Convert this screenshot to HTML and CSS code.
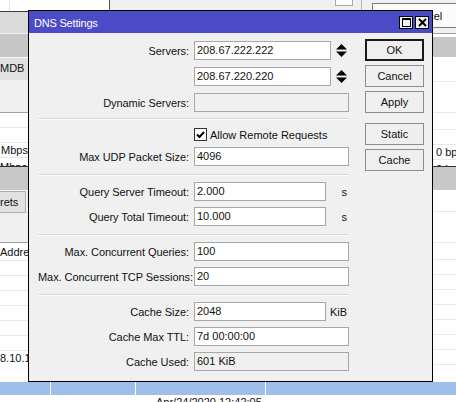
FILE: index.html
```html
<!DOCTYPE html>
<html>
<head>
<meta charset="utf-8">
<title>DNS Settings</title>
<link rel="stylesheet" href="styles.css">
</head>
<body>
<div class="desk">
  <div class="bg-left">
    <div class="l-top"></div>
    <div class="l-hdr1"></div>
    <div class="l-hdr2"></div>
    <div class="l-sel"><span class="txt">MDB</span></div>
    <div class="l-pane"></div>
    <div class="l-list">
      <div class="trow r15"></div>
      <div class="trow r15"></div>
      <div class="trow r15"><span class="txt">Mbps</span></div>
      <div class="trow cut"><span class="txt">Mbps</span></div>
    </div>
    <div class="l-hdr3"></div>
    <div class="l-tool"><span class="l-tbtn">rets</span></div>
    <div class="l-table">
      <div class="trow thead"><span class="txt">Addres</span></div>
      <div class="trow r15"></div>
      <div class="trow r15"></div>
      <div class="trow r15"></div>
      <div class="trow r15"></div>
      <div class="trow r15"></div>
      <div class="trow r15"></div>
      <div class="trow r15"><span class="txt">8.10.1</span></div>
    </div>
    <div class="blue"></div>
    <div class="foot"></div>
  </div>

  <div class="bg-mid">
    <div class="m-top">
      <div class="m-white"></div>
      <div class="m-gray">
        <span class="m-box"></span>
        <span class="m-vline"></span>
        <span class="m-btn"></span>
      </div>
    </div>
    <div class="m-hidden"></div>
    <div class="blue m-blue">
      <span class="bsep s1"></span>
      <span class="bsep s2"></span>
      <span class="bsep s3"></span>
    </div>
    <div class="foot m-foot"><span class="date">Apr/24/2020 12:42:05</span></div>
  </div>

  <div class="bg-right">
    <div class="r-top"></div>
    <div class="r-btn"><span class="r-btn-txt">Cancel</span></div>
    <div class="r-gap"></div>
    <div class="r-hdr0"></div>
    <div class="r-hdr2"></div>
    <div class="r-list">
      <div class="trow r25"></div>
      <div class="trow r31"></div>
      <div class="trow r17"></div>
      <div class="trow r15"></div>
      <div class="trow r15"><span class="txt">0 bps</span></div>
      <div class="trow cut"><span class="txt">0 bps</span></div>
    </div>
    <div class="l-hdr3"></div>
    <div class="r-table">
      <div class="trow r22"></div>
      <div class="trow r31"></div>
      <div class="trow r17"></div>
      <div class="trow r15"></div>
      <div class="trow r15"></div>
      <div class="trow r15"></div>
      <div class="trow r15"></div>
      <div class="trow r15"></div>
      <div class="trow r15"></div>
      <div class="trow r15"></div>
    </div>
    <div class="blue"></div>
    <div class="foot"></div>
  </div>
</div>

<div class="dialog">
  <div class="titlebar">
    <span class="title">DNS Settings</span>
    <span class="tb-btns">
      <span class="tb-btn">
        <svg width="9" height="9" viewBox="0 0 9 9"><rect x="0.5" y="0.5" width="8" height="8" fill="none" stroke="#000" stroke-width="1"/><rect x="0" y="0" width="9" height="2" fill="#000"/></svg>
      </span>
      <span class="tb-btn">
        <svg width="9" height="9" viewBox="0 0 9 9"><path d="M1 1 L8 8 M8 1 L1 8" stroke="#000" stroke-width="2" fill="none"/></svg>
      </span>
    </span>
  </div>
  <div class="dlg-body">
    <div class="form">
      <div class="group g1">
        <div class="row">
          <span class="lbl">Servers:</span>
          <span class="input w-srv">208.67.222.222</span>
          <span class="updown"><svg width="11" height="13" viewBox="0 0 11 13"><polygon points="0,5.5 5.5,0 11,5.5" fill="#000"/><polygon points="0,7.5 5.5,13 11,7.5" fill="#000"/></svg></span>
        </div>
        <div class="row">
          <span class="lbl"></span>
          <span class="input w-srv">208.67.220.220</span>
          <span class="updown"><svg width="11" height="13" viewBox="0 0 11 13"><polygon points="0,5.5 5.5,0 11,5.5" fill="#000"/><polygon points="0,7.5 5.5,13 11,7.5" fill="#000"/></svg></span>
        </div>
        <div class="row">
          <span class="lbl">Dynamic Servers:</span>
          <span class="input w-full disabled"></span>
        </div>
      </div>
      <div class="sep"></div>
      <div class="group g2">
        <div class="row">
          <span class="lbl"></span>
          <span class="check"><svg width="9" height="8" viewBox="0 0 9 8"><path d="M1 3.5 L3.5 6 L8 1" stroke="#000" stroke-width="2" fill="none"/></svg></span>
          <span class="check-lbl">Allow Remote Requests</span>
        </div>
        <div class="row">
          <span class="lbl">Max UDP Packet Size:</span>
          <span class="input w-full">4096</span>
        </div>
      </div>
      <div class="sep"></div>
      <div class="group">
        <div class="row">
          <span class="lbl">Query Server Timeout:</span>
          <span class="input w-short">2.000</span>
          <span class="unit">s</span>
        </div>
        <div class="row">
          <span class="lbl">Query Total Timeout:</span>
          <span class="input w-short">10.000</span>
          <span class="unit">s</span>
        </div>
      </div>
      <div class="sep"></div>
      <div class="group">
        <div class="row">
          <span class="lbl">Max. Concurrent Queries:</span>
          <span class="input w-full">100</span>
        </div>
        <div class="row">
          <span class="lbl">Max. Concurrent TCP Sessions:</span>
          <span class="input w-full">20</span>
        </div>
      </div>
      <div class="sep"></div>
      <div class="group">
        <div class="row">
          <span class="lbl">Cache Size:</span>
          <span class="input w-short">2048</span>
          <span class="unit">KiB</span>
        </div>
        <div class="row">
          <span class="lbl">Cache Max TTL:</span>
          <span class="input w-full">7d 00:00:00</span>
        </div>
        <div class="row">
          <span class="lbl">Cache Used:</span>
          <span class="input w-full disabled">601 KiB</span>
        </div>
      </div>
    </div>
    <div class="buttons">
      <button class="btn default">OK</button>
      <button class="btn">Cancel</button>
      <button class="btn">Apply</button>
      <button class="btn gap-top">Static</button>
      <button class="btn">Cache</button>
    </div>
  </div>
</div>
</body>
</html>
```

FILE: styles.css
```css
* { box-sizing: border-box; margin: 0; padding: 0; }
html, body { width: 456px; height: 402px; overflow: hidden; }
body {
  font-family: "Liberation Sans", Arial, sans-serif;
  font-size: 11px;
  color: #111;
  background: #fff;
  position: relative;
}

/* ---------- background desktop ---------- */
.desk { display: flex; width: 456px; height: 402px; }
.bg-left { width: 28px; display: flex; flex-direction: column; }
.bg-mid { width: 405px; display: flex; flex-direction: column; }
.bg-right { width: 23px; display: flex; flex-direction: column; overflow: hidden; }

.txt { white-space: nowrap; line-height: 15px; display: block; }

.l-top { height: 11px; background: #fff; border-left: 9px solid #fff; box-shadow: inset 1px 0 0 #e2e2e2; }
.l-hdr1 { height: 22px; background: #dadada; border-top: 1px solid #3a3a3a; }
.l-hdr2 { height: 24px; background: #c6c6c6; border-top: 1px solid #f2f2f2; }
.l-sel { height: 23px; background: #e1e1e1; border-top: 1px solid #fafafa; padding-top: 3px; }
.l-pane { height: 32px; background: #f0f0f0; }
.l-list { height: 54px; background: #fff; border-top: 1px solid #a0a0a0; display: flex; flex-direction: column; overflow: hidden; }
.trow { border-bottom: 1px solid #e8e8e8; flex: none; overflow: visible; }
.r15 { height: 15px; }
.r17 { height: 17px; }
.r22 { height: 22px; }
.r25 { height: 25px; }
.r31 { height: 31px; }
.cut { height: 9px; overflow: hidden; border-bottom: 0; }
.cut .txt { line-height: 15px; margin-top: 2px; }
.l-list .r15 .txt { padding-left: 1px; }
.l-hdr3 { height: 24px; background: #c8c8c8; border-top: 1px solid #303030; }
.l-tool { height: 52px; background: #f0f0f0; padding-top: 1px; }
.l-tbtn {
  display: block; width: 26px; height: 22px; background: #e1e1e1;
  border: 1px solid #adadad; border-left: 0; line-height: 20px; text-align: right; padding-right: 7px;
}
.l-table { height: 140px; background: #fff; border-top: 1px solid #a0a0a0; display: flex; flex-direction: column; overflow: hidden; }
.thead { height: 18px; padding-top: 2px; }
.l-table .r15:last-child { border-bottom: 0; padding-top: 0; }
.blue { height: 13px; background: #9dbfe9; position: relative; flex: none; }
.foot { height: 7px; background: #fff; flex: none; overflow: hidden; }

.m-top { height: 10px; display: flex; }
.m-white { width: 82px; background: #fff; border-right: 1px solid #505050; }
.m-gray { flex: 1; background: #f0f0f0; position: relative; }
.m-box { position: absolute; left: 225px; top: 0; width: 18px; height: 6px; background: #fff; border: 1px solid #a8a8a8; border-top: 0; }
.m-vline { position: absolute; left: 251px; top: 0; width: 1px; height: 10px; background: #b4b4b4; }
.m-btn { position: absolute; left: 262px; top: 3px; right: 0; height: 8px; background: #fbfbfb; border: 1px solid #7a7a7a; border-right: 0; border-bottom: 0; }
.m-hidden { flex: 1; }
.bsep { position: absolute; top: 0; width: 1px; height: 13px; background: #fff; }
.s1 { left: 22px; }
.s2 { left: 107px; }
.s3 { left: 237px; }
.m-foot { position: relative; }
.date { position: absolute; left: 128px; top: 1px; white-space: nowrap; line-height: 13px; }

.r-top { height: 3px; background: #f0f0f0; }
.r-btn { height: 25px; background: #fbfbfb; border-top: 1px solid #7a7a7a; border-bottom: 1px solid #7a7a7a; overflow: hidden; }
.r-btn-txt { display: block; white-space: nowrap; margin-left: -25px; line-height: 20px; padding-top: 2px; }
.r-gap { height: 5px; background: #f0f0f0; }
.r-hdr0 { height: 4px; background: #fff; border-top: 1px solid #a0a0a0; }
.r-hdr2 { height: 20px; background: #c6c6c6; }
.r-list { height: 109px; background: #fff; display: flex; flex-direction: column; overflow: hidden; }
.r-list .txt { padding-left: 3px; }
.r-table { height: 192px; background: #fff; display: flex; flex-direction: column; overflow: hidden; }

/* ---------- dialog ---------- */
.dialog {
  position: absolute; left: 28px; top: 10px;
  width: 405px; height: 372px;
  border: 1px solid #000;
  background: #f0f0f0;
  display: flex; flex-direction: column;
}
.titlebar {
  height: 22px; flex: none;
  background: #4b4bc8;
  display: flex; justify-content: space-between; align-items: flex-start;
  padding: 0 3px 0 5px;
}
.title { color: #fff; line-height: 13px; padding-top: 6px; white-space: nowrap; letter-spacing: -0.2px; }
.tb-btns { display: flex; gap: 2px; padding-top: 5px; }
.tb-btn {
  width: 14px; height: 13px; background: #f0f0f0; border: 1px solid #000;
  display: flex; align-items: center; justify-content: center;
}
.tb-btn svg { display: block; }

.dlg-body { flex: 1; display: flex; align-items: flex-start; padding-left: 9px; }
.form { width: 311px; display: flex; flex-direction: column; padding-top: 8px; }
.group { display: flex; flex-direction: column; gap: 6px; padding: 6px 0 8px; }
.g1 { gap: 7px; padding: 0 0 6px; }
.g2 { gap: 3px; padding: 5px 0 8px; }
.sep { height: 2px; border-top: 1px solid #d9d9d9; border-bottom: 1px solid #fbfbfb; }
.row { display: flex; align-items: center; height: 19px; }
.lbl { width: 151px; text-align: right; white-space: nowrap; flex: none; margin-right: 5px; letter-spacing: -0.06px; }
.input {
  height: 19px; background: #fff; border: 1px solid #a7a7a7;
  line-height: 17px; padding-left: 2px; white-space: nowrap; flex: none;
}
.input.disabled { background: #f0f0f0; }
.w-srv { width: 137px; }
.w-short { width: 132px; }
.w-full { width: 155px; }
.updown { margin-left: 5px; display: flex; }
.updown svg { display: block; }
.unit { width: 21px; text-align: right; }
.check {
  width: 13px; height: 13px; background: #fff; border: 1px solid #333;
  display: flex; align-items: center; justify-content: center; flex: none;
}
.check-lbl { margin-left: 3px; white-space: nowrap; }

.buttons { display: flex; flex-direction: column; gap: 4px; margin-left: 16px; padding-top: 6px; }
.btn {
  width: 59px; height: 22px;
  font-family: "Liberation Sans", Arial, sans-serif; font-size: 11px; color: #111;
  background: #efefef; border: 1px solid #8c8c8c;
  display: flex; align-items: center; justify-content: center;
}
.btn.default { border: 2px solid #1a1a1a; }
.gap-top { margin-top: 6px; }
```
